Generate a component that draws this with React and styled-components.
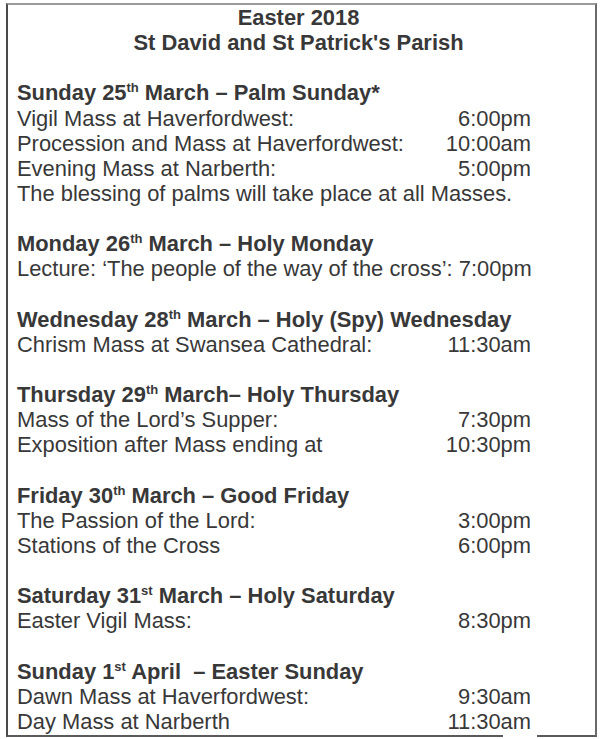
import React from "react";
import styled, { createGlobalStyle } from "styled-components";

const Global = createGlobalStyle`
  html, body { margin: 0; padding: 0; background: #fff; }
  body { font-family: "Liberation Sans", Arial, sans-serif; }
`;

const LINE = 25.14;

const Page = styled.div`
  padding: 3px 0 0 6px;
`;

const Frame = styled.div`
  position: relative;
  box-sizing: border-box;
  width: 591px;
  height: 734px;
  border-top: 2px solid #9a9a9a;
  border-left: 2px solid #4a4a4a;
  border-right: 2px solid #6a6a6a;
  border-bottom: 2px solid #5a5a5a;
  padding: 0 0 0 9px;
  color: #383838;
  font-size: 21.9px;
  line-height: ${LINE}px;
  display: flex;
  flex-direction: column;
  gap: ${LINE}px;
`;

const Gap = styled.div`
  position: absolute;
  left: 495px;
  bottom: -2px;
  width: 34px;
  height: 2px;
  background: #fff;
`;

const Title = styled.header`
  width: 563px;
  text-align: center;
  font-weight: bold;
`;

const Section = styled.section`
  display: flex;
  flex-direction: column;
  width: 514px;
`;

const Heading = styled.div`
  font-weight: bold;
  white-space: pre;
`;

const Sup = styled.sup`
  font-size: 13px;
  line-height: 0;
  vertical-align: 8px;
`;

const Row = styled.div`
  display: flex;
  justify-content: space-between;
  white-space: pre;
`;

const Time = styled.span`
  text-align: right;
`;

const Note = styled.div`
  white-space: pre;
`;

const sections = [
  {
    day: "Sunday 25",
    sup: "th",
    rest: " March – Palm Sunday*",
    rows: [
      ["Vigil Mass at Haverfordwest:", "6:00pm"],
      ["Procession and Mass at Haverfordwest:", "10:00am"],
      ["Evening Mass at Narberth:", "5:00pm"],
    ],
    note: "The blessing of palms will take place at all Masses.",
  },
  {
    day: "Monday 26",
    sup: "th",
    rest: " March – Holy Monday",
    rows: [],
    note: "Lecture: ‘The people of the way of the cross’: 7:00pm",
  },
  {
    day: "Wednesday 28",
    sup: "th",
    rest: " March – Holy (Spy) Wednesday",
    rows: [["Chrism Mass at Swansea Cathedral:", "11:30am"]],
  },
  {
    day: "Thursday 29",
    sup: "th",
    rest: " March– Holy Thursday",
    rows: [
      ["Mass of the Lord’s Supper:", "7:30pm"],
      ["Exposition after Mass ending at", "10:30pm"],
    ],
  },
  {
    day: "Friday 30",
    sup: "th",
    rest: " March – Good Friday",
    rows: [
      ["The Passion of the Lord:", "3:00pm"],
      ["Stations of the Cross", "6:00pm"],
    ],
  },
  {
    day: "Saturday 31",
    sup: "st",
    rest: " March – Holy Saturday",
    rows: [["Easter Vigil Mass:", "8:30pm"]],
  },
  {
    day: "Sunday 1",
    sup: "st",
    rest: " April  – Easter Sunday",
    rows: [
      ["Dawn Mass at Haverfordwest:", "9:30am"],
      ["Day Mass at Narberth", "11:30am"],
    ],
  },
];

export default function App() {
  return (
    <Page>
      <Global />
      <Frame>
        <Title>
          <div>Easter 2018</div>
          <div>St David and St Patrick's Parish</div>
        </Title>
        {sections.map((s) => (
          <Section key={s.day}>
            <Heading>
              {s.day}
              <Sup>{s.sup}</Sup>
              {s.rest}
            </Heading>
            {s.rows.map(([label, time]) => (
              <Row key={label}>
                <span>{label}</span>
                <Time>{time}</Time>
              </Row>
            ))}
            {s.note && <Note>{s.note}</Note>}
          </Section>
        ))}
        <Gap />
      </Frame>
    </Page>
  );
}
